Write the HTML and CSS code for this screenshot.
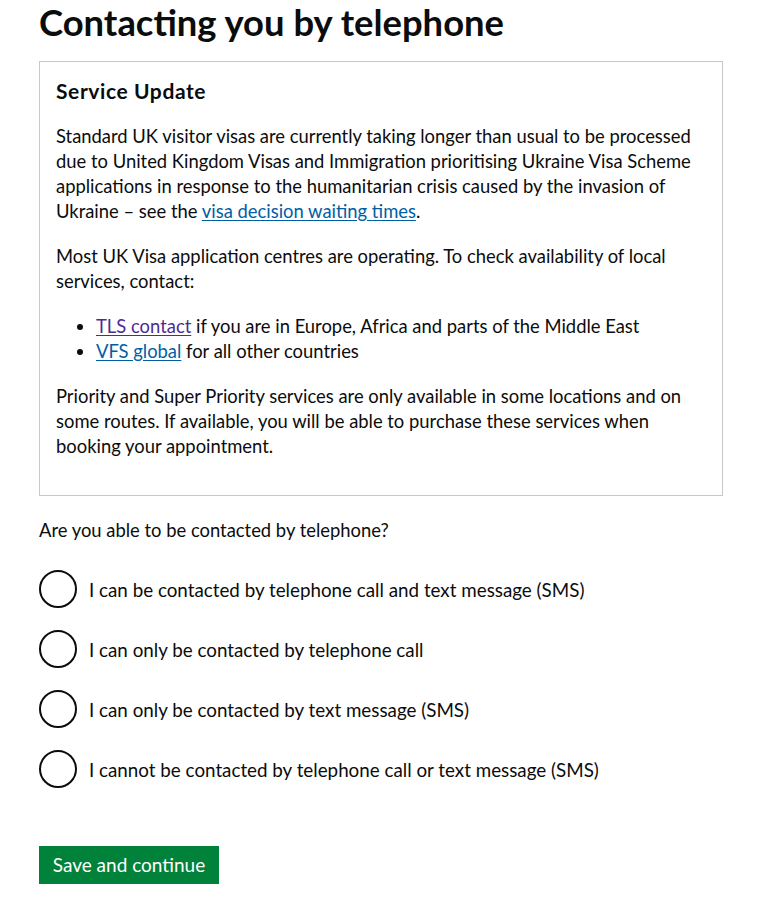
FILE: index.html
```html
<!DOCTYPE html>
<html lang="en">
<head>
<meta charset="utf-8">
<title>Contacting you by telephone</title>
<link rel="stylesheet" href="styles.css">
</head>
<body>
<main class="page">
  <h1 class="title">Contacting you by telephone</h1>
  <section class="notice">
    <h2 class="notice-title">Service Update</h2>
    <p class="body-text">Standard UK visitor visas are currently taking longer than usual to be processed due to United Kingdom Visas and Immigration prioritising Ukraine Visa Scheme applications in response to the humanitarian crisis caused by the invasion of Ukraine – see the <a class="link" href="#">visa decision waiting times</a>.</p>
    <p class="body-text">Most UK Visa application centres are operating. To check availability of local services, contact:</p>
    <ul class="bullets">
      <li><a class="link link-visited" href="#">TLS contact</a> if you are in Europe, Africa and parts of the Middle East</li>
      <li><a class="link" href="#">VFS global</a> for all other countries</li>
    </ul>
    <p class="body-text">Priority and Super Priority services are only available in some locations and on some routes. If available, you will be able to purchase these services when booking your appointment.</p>
  </section>
  <fieldset class="question">
    <legend class="question-legend">Are you able to be contacted by telephone?</legend>
    <div class="radios">
      <label class="radio"><span class="radio-circle"></span><span class="radio-label">I can be contacted by telephone call and text message (SMS)</span></label>
      <label class="radio"><span class="radio-circle"></span><span class="radio-label">I can only be contacted by telephone call</span></label>
      <label class="radio"><span class="radio-circle"></span><span class="radio-label">I can only be contacted by text message (SMS)</span></label>
      <label class="radio"><span class="radio-circle"></span><span class="radio-label">I cannot be contacted by telephone call or text message (SMS)</span></label>
    </div>
  </fieldset>
  <button class="button" type="button">Save and continue</button>
</main>
</body>
</html>
```

FILE: styles.css
```css
html, body {
  margin: 0;
  padding: 0;
  background: #ffffff;
}
body {
  font-family: Lato, "Liberation Sans", sans-serif;
  color: #0b0c0c;
}
.page {
  width: 684px;
  margin: 0 0 0 39px;
  padding-top: 2px;
}
.title {
  font-size: 36.4px;
  line-height: 40px;
  font-weight: 700;
  margin: 0 0 19px 0;
}
.notice {
  border: 1px solid #c8c8c8;
  padding: 16px 16px 16px 16px;
}
.notice-title {
  font-size: 21px;
  line-height: 25px;
  font-weight: 700;
  letter-spacing: 0.6px;
  margin: 0 0 21px 0;
}
.body-text {
  font-size: 18.4px;
  line-height: 25px;
  margin: 0 0 20px 0;
}
.bullets {
  font-size: 18.4px;
  line-height: 25px;
  margin: 0 0 20px 0;
  padding-left: 40px;
}
.link {
  color: #005ea5;
  text-decoration: underline;
  text-underline-offset: 2px;
}
.link-visited {
  color: #4c2c92;
}
.question {
  border: 0;
  margin: 22px 0 0 0;
  padding: 0;
}
.question-legend {
  padding: 0;
  font-size: 18.4px;
  line-height: 25px;
}
.radios {
  display: flex;
  flex-direction: column;
  gap: 20px;
  padding-top: 26px;
}
.radio {
  display: flex;
  align-items: center;
  gap: 12px;
  height: 40px;
}
.radio-circle {
  box-sizing: border-box;
  width: 38px;
  height: 38px;
  border: 2px solid #0b0c0c;
  border-radius: 50%;
  flex: none;
}
.radio-label {
  font-size: 18.8px;
  line-height: 25px;
}
.button {
  display: block;
  margin-top: 57px;
  background: #00823b;
  color: #ffffff;
  border: 0;
  box-shadow: 0 2px 0 #003618;
  font-family: inherit;
  font-size: 19px;
  line-height: 22px;
  padding: 8px 0;
  width: 180px;
  height: 38px;
  cursor: pointer;
}
```
